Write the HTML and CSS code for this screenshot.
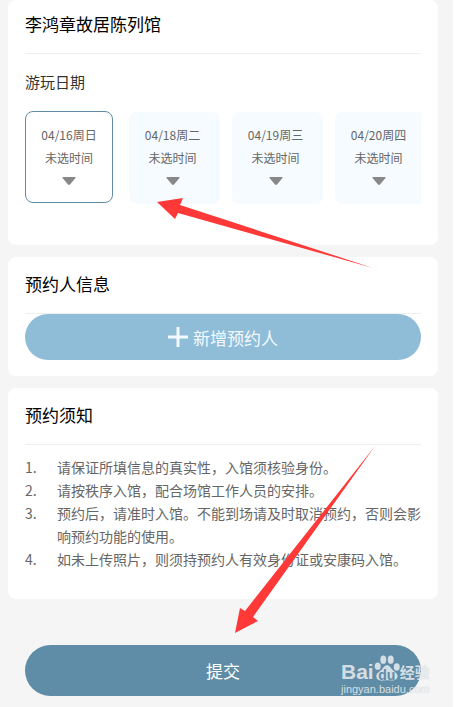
FILE: index.html
```html
<!DOCTYPE html>
<html lang="zh-CN">
<head>
    <meta charset="UTF-8">
    <meta name="viewport" content="width=device-width, initial-scale=1.0">
    <title>预约</title>
    <link rel="stylesheet" href="styles.css">
</head>
<body>
    <main class="page">
        <section class="card visit">
            <h1 class="title">李鸿章故居陈列馆</h1>
            <h2 class="subtitle">游玩日期</h2>
            <div class="dates">
                <button type="button" class="date selected">
                    <span>04/16周日</span>
                    <span>未选时间</span>
                    <svg class="caret" viewBox="0 0 14 8"><path d="M1 0h12q1 0 .5 1L8 7.500q-1 .8-2 0L.5 1Q0 0 1 0z"/></svg>
                </button>
                <button type="button" class="date">
                    <span>04/18周二</span>
                    <span>未选时间</span>
                    <svg class="caret" viewBox="0 0 14 8"><path d="M1 0h12q1 0 .5 1L8 7.500q-1 .8-2 0L.5 1Q0 0 1 0z"/></svg>
                </button>
                <button type="button" class="date">
                    <span>04/19周三</span>
                    <span>未选时间</span>
                    <svg class="caret" viewBox="0 0 14 8"><path d="M1 0h12q1 0 .5 1L8 7.500q-1 .8-2 0L.5 1Q0 0 1 0z"/></svg>
                </button>
                <button type="button" class="date">
                    <span>04/20周四</span>
                    <span>未选时间</span>
                    <svg class="caret" viewBox="0 0 14 8"><path d="M1 0h12q1 0 .5 1L8 7.500q-1 .8-2 0L.5 1Q0 0 1 0z"/></svg>
                </button>
            </div>
        </section>

        <section class="card person">
            <h2 class="title">预约人信息</h2>
            <button type="button" class="add">
                <svg class="plus" viewBox="0 0 20 20"><path d="M10 0v20M0 10h20"/></svg>
                新增预约人
            </button>
        </section>

        <section class="card notice">
            <h2 class="title">预约须知</h2>
            <ol class="rules">
                <li>请保证所填信息的真实性，入馆须核验身份。</li>
                <li>请按秩序入馆，配合场馆工作人员的安排。</li>
                <li>预约后，请准时入馆。不能到场请及时取消预约，否则会影响预约功能的使用。</li>
                <li>如未上传照片，则须持预约人有效身份证或安康码入馆。</li>
            </ol>
        </section>

        <button type="button" class="submit">提交</button>

        <div class="watermark">
            <div class="brand">
                <span class="bai">Bai</span>
                <span class="paw">
                    <svg viewBox="0 0 28 28">
                        <ellipse cx="4" cy="12" rx="3.200" ry="4"/>
                        <ellipse cx="10" cy="5" rx="3.200" ry="4.500"/>
                        <ellipse cx="18" cy="5" rx="3.200" ry="4.500"/>
                        <ellipse cx="24.500" cy="13" rx="3.200" ry="4"/>
                        <path d="M14 11c-3 0-4 3-6 5s-6 4-5.500 7.500S6 28 9.500 27.500s6-.5 9 0 6.500-1 7-4-3.500-5.500-5.500-7.500-3-5-6-5z"/>
                    </svg>
                    <span class="du">du</span>
                </span>
                <span class="jingyan">经验</span>
            </div>
            <div class="site">jingyan.baidu.com</div>
        </div>

        <svg class="arrows" width="458" height="707" viewBox="0 0 458 707">
            <path d="M157 202l26-4-3 7 193 63-195-55-3 6z"/>
            <path d="M375 446L253 617l5 4-23 12 5-25 5 3z"/>
        </svg>
    </main>
</body>
</html>
```

FILE: styles.css
```css
* {
    box-sizing: border-box;
}
body {
    margin: 0;
    background-color: white;
    font-family: "Noto Sans CJK SC", sans-serif;
    color: #000;
}
h1, h2, ol {
    margin: 0;
    padding: 0;
}
button {
    border: none;
    font-family: inherit;
    cursor: pointer;
}
.page {
    position: relative;
    min-height: 100vh;
    margin-right: 5px;
    padding: 0 15px 11px 8px;
    background-color: #f5f5f5;
    overflow: hidden;
}
.card {
    margin-bottom: 12px;
    padding: 0 17px;
    border-radius: 8px;
    background-color: white;
}
.title {
    height: 57px;
    border-bottom: 1px solid #eee;
    font-size: 17px;
    font-weight: 400;
    line-height: 54px;
}

.visit {
    padding-bottom: 41px;
}
.visit .title {
    height: 54px;
    line-height: 48px;
}
.subtitle {
    height: 57px;
    font-size: 15px;
    font-weight: 400;
    line-height: 55px;
    color: #333;
}
.dates {
    display: flex;
    gap: 12px;
    overflow: hidden;
}
.date {
    display: flex;
    flex: 0 0 91px;
    flex-direction: column;
    align-items: center;
    height: 92px;
    margin-top: 1px;
    padding: 11px 4px 0 0;
    border-radius: 8px;
    background-color: #f5fbff;
    font-size: 12px;
    line-height: 23px;
    color: #666;
}
.selected {
    flex-basis: 88px;
    margin: 0 4px 1px 0;
    padding-right: 0;
    border: 1px solid #5f8ca6;
    background-color: white;
}
.caret {
    width: 14px;
    height: 8px;
    margin-top: 8px;
    fill: #888;
}

.person {
    padding-bottom: 16px;
}
.add {
    display: flex;
    align-items: center;
    justify-content: center;
    gap: 5px;
    width: 100%;
    height: 46px;
    border-radius: 23px;
    background-color: #8fbcd7;
    font-size: 17px;
    color: #f3faff;
}
.plus {
    width: 20px;
    height: 20px;
    stroke: #f3faff;
    stroke-width: 3;
}

.notice {
    padding-bottom: 28px;
}
.rules {
    padding-top: 11px;
    list-style: none;
    counter-reset: rule;
    font-size: 14px;
    line-height: 23px;
    color: #666;
}
.rules li {
    display: flex;
    counter-increment: rule;
}
.rules li::before {
    content: counter(rule) ".";
    flex: 0 0 32px;
}

.submit {
    display: block;
    width: calc(100% - 34px);
    height: 51px;
    margin: 46px 17px 0;
    border-radius: 26px;
    background-color: #5f8ca6;
    font-size: 17px;
    color: white;
}

.watermark {
    position: absolute;
    right: 22px;
    bottom: 11px;
    width: 90px;
    color: rgba(240, 243, 246, 0.8);
    font-family: "Liberation Sans", "Noto Sans CJK SC", sans-serif;
    text-shadow: 0 0 1px rgba(130, 150, 165, 0.4);
}
.brand {
    display: flex;
    align-items: flex-end;
    height: 28px;
    font-weight: 700;
}
.bai {
    font-size: 21px;
    line-height: 20px;
}
.paw {
    position: relative;
    width: 26px;
    height: 28px;
}
.paw svg {
    width: 26px;
    height: 28px;
    fill: rgba(240, 243, 246, 0.8);
}
.du {
    position: absolute;
    left: 0;
    right: 0;
    bottom: 0;
    font-size: 14px;
    line-height: 14px;
    text-align: center;
    text-shadow: none;
    color: #5f8ca6;
}
.jingyan {
    font-size: 15px;
    line-height: 19px;
}
.site {
    font-size: 11px;
    line-height: 14px;
}

.arrows {
    position: absolute;
    top: 0;
    left: 0;
    fill: #ff3838;
    pointer-events: none;
}
```
